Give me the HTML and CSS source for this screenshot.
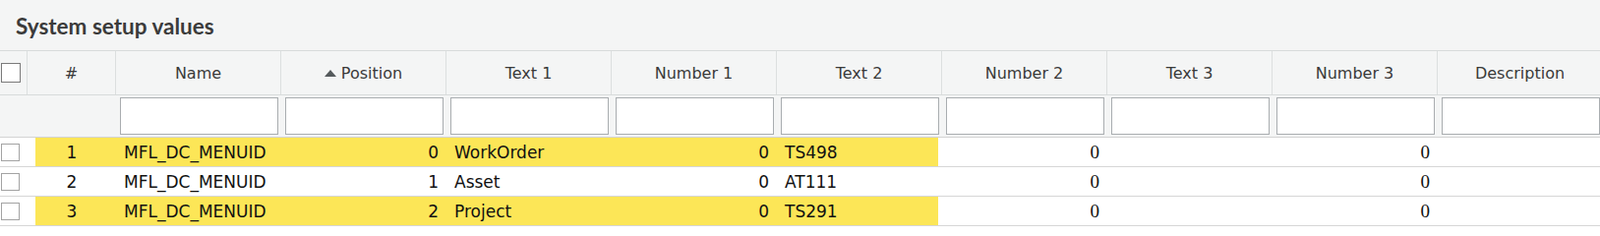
FILE: index.html
```html
<!DOCTYPE html>
<html>
<head>
<meta charset="utf-8">
<title>System setup values</title>
<link rel="stylesheet" href="styles.css">
</head>
<body>
<div class="title">System setup values</div>
<div class="grid">
  <div class="row head">
    <div class="hc chk-cell"><span class="chk big"></span></div>
    <div class="hc">#</div>
    <div class="hc">Name</div>
    <div class="hc"><span class="sort"></span>Position</div>
    <div class="hc">Text 1</div>
    <div class="hc">Number 1</div>
    <div class="hc">Text 2</div>
    <div class="hc">Number 2</div>
    <div class="hc">Text 3</div>
    <div class="hc">Number 3</div>
    <div class="hc">Description</div>
  </div>
  <div class="row filter">
    <div class="fc"></div>
    <div class="fc"></div>
    <div class="fc"><input type="text"></div>
    <div class="fc"><input type="text"></div>
    <div class="fc"><input type="text"></div>
    <div class="fc"><input type="text"></div>
    <div class="fc"><input type="text"></div>
    <div class="fc"><input type="text"></div>
    <div class="fc"><input type="text"></div>
    <div class="fc"><input type="text"></div>
    <div class="fc"><input type="text"></div>
  </div>
  <div class="row data hl">
    <div class="dc chk-cell"><span class="chk"></span></div>
    <div class="dc num-c y first">1</div>
    <div class="dc txt y">MFL_DC_MENUID</div>
    <div class="dc num y">0</div>
    <div class="dc txt y">WorkOrder</div>
    <div class="dc num y">0</div>
    <div class="dc txt y last">TS498</div>
    <div class="dc num serif">0</div>
    <div class="dc txt"></div>
    <div class="dc num serif">0</div>
    <div class="dc txt"></div>
  </div>
  <div class="row data">
    <div class="dc chk-cell"><span class="chk"></span></div>
    <div class="dc num-c">2</div>
    <div class="dc txt">MFL_DC_MENUID</div>
    <div class="dc num">1</div>
    <div class="dc txt">Asset</div>
    <div class="dc num">0</div>
    <div class="dc txt">AT111</div>
    <div class="dc num serif">0</div>
    <div class="dc txt"></div>
    <div class="dc num serif">0</div>
    <div class="dc txt"></div>
  </div>
  <div class="row data hl">
    <div class="dc chk-cell"><span class="chk"></span></div>
    <div class="dc num-c y first">3</div>
    <div class="dc txt y">MFL_DC_MENUID</div>
    <div class="dc num y">2</div>
    <div class="dc txt y">Project</div>
    <div class="dc num y">0</div>
    <div class="dc txt y last">TS291</div>
    <div class="dc num serif">0</div>
    <div class="dc txt"></div>
    <div class="dc num serif">0</div>
    <div class="dc txt"></div>
  </div>
</div>
</body>
</html>
```
FILE: styles.css
```css
html, body {
  margin: 0;
  padding: 0;
  background: #ffffff;
  overflow: hidden;
}
body {
  width: 1627px;
  font-family: "DejaVu Sans", sans-serif;
}
.title {
  box-sizing: border-box;
  height: 51px;
  padding-top: 2px;
  line-height: 50px;
  background: #f4f5f5;
  padding-left: 16px;
  font-family: Lato, "DejaVu Sans", sans-serif;
  font-weight: 700;
  font-size: 22.5px;
  color: #3b3b3b;
  overflow: hidden;
}
.grid {
  width: 1630px;
}
.row {
  display: grid;
  grid-template-columns: 28px 90px repeat(9, 168px);
}
.head {
  height: 44px;
  background: #f4f5f5;
  border-top: 1px solid #d8dbdb;
  border-bottom: 1px solid #d8dbdb;
}
.hc {
  display: flex;
  align-items: center;
  justify-content: center;
  border-right: 1px solid #dcdfdf;
  font-size: 16px;
  color: #3a3a3a;
  white-space: nowrap;
}
.hc.chk-cell {
  justify-content: flex-start;
  padding-left: 1px;
}
.chk {
  display: block;
  box-sizing: border-box;
  width: 19px;
  height: 18px;
  background: #ffffff;
  border: 1px solid #a3a3a3;
}
.chk.big {
  width: 20px;
  height: 20px;
  border-color: #7a7a7a;
}
.sort {
  width: 0;
  height: 0;
  border-left: 6.5px solid transparent;
  border-right: 6.5px solid transparent;
  border-bottom: 7px solid #555a5c;
  margin-right: 5px;
}
.filter {
  height: 42px;
  background: #f4f5f5;
  border-bottom: 1px solid #d3d3d3;
}
.fc {
  display: flex;
  align-items: center;
  padding-left: 4px;
}
.fc input {
  box-sizing: border-box;
  width: 161px;
  height: 38px;
  margin: 0;
  padding: 0 6px;
  border: 1px solid #a9adb0;
  border-radius: 0;
  background: #ffffff;
  outline: none;
}
.data {
  height: 29px;
  border-bottom: 1px solid #d6d6d6;
}
.dc {
  display: flex;
  align-items: center;
  font-size: 17px;
  color: #111111;
  white-space: nowrap;
  overflow: hidden;
}
.dc.chk-cell {
  padding-left: 1px;
}
.txt {
  padding-left: 8px;
}
.num {
  justify-content: flex-end;
  padding-right: 8px;
}
.num-c {
  justify-content: center;
}
.serif {
  font-family: "Liberation Serif", serif;
  font-size: 19px;
}
.y {
  background: #fce657;
}
.y.first {
  background: linear-gradient(to right, transparent 8px, #fce657 8px);
}
.y.last {
  background: linear-gradient(to left, transparent 4px, #fce657 4px);
}
```
